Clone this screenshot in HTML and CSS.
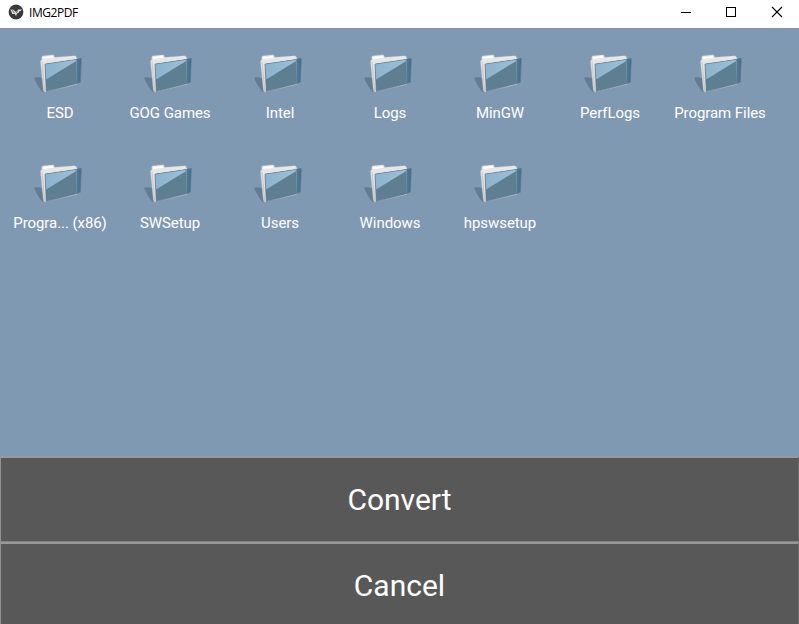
FILE: index.html
```html
<!DOCTYPE html>
<html lang="en">
<head>
<meta charset="utf-8">
<title>IMG2PDF</title>
<link rel="stylesheet" href="styles.css">
</head>
<body>
<svg width="0" height="0" class="defs">
  <defs>
    <linearGradient id="paper" x1="0" y1="0" x2="0" y2="1"><stop offset="0" stop-color="#e9e9e8"/><stop offset="1" stop-color="#d8d8d6"/></linearGradient>
    <linearGradient id="shine" x1="0" y1="0" x2="1" y2="0"><stop offset="0" stop-color="#8cb3cd"/><stop offset="1" stop-color="#9cc0d8"/></linearGradient>
    <linearGradient id="edge" x1="0" y1="0" x2="1" y2="0"><stop offset="0" stop-color="#557c95"/><stop offset="1" stop-color="#416b8b"/></linearGradient>
    <filter id="soft"><feGaussianBlur stdDeviation="1.5"/></filter>
    <symbol id="folder" viewBox="0 0 210 165">
      <path d="M27 98Q38 94 52 100L60 141L52 140Q38 124 27 98Z" fill="#637b92" filter="url(#soft)"/>
      <path d="M46 48L50 44L50 36Q51 32 55 32L84 29Q88 30 89 37L148 32Q153 32 154 36L158 44L156 118L62 141Q56 142 55 136Z" fill="url(#paper)" stroke="#a7b1b9" stroke-width="1"/>
      <path d="M55 36L82 33L86 38L54 42Z" fill="#fff"/>
      <path d="M51 50L59 138" fill="none" stroke="#bdbdba" stroke-width="2"/>
      <path d="M60 57L154 43L155 116L64 139Z" fill="#5e7e92"/>
      <path d="M60 57L155 43L155 47L62 104Z" fill="url(#shine)"/>
      <path d="M154 42L169 40L166 111L154 116Z" fill="url(#edge)"/>
      <path d="M60 57L169 41L166 112L64 140Z" fill="none" stroke="#5c788c" stroke-width="2" stroke-linejoin="round"/>
      <path d="M57 54L154 40" fill="none" stroke="#e4e6e5" stroke-width="3"/>
    </symbol>
  </defs>
</svg>
<div class="window">
  <header class="titlebar">
    <svg class="logo" width="16" height="16" viewBox="0 0 16 16"><circle cx="8" cy="8" r="7.4" fill="#38393b"/><path d="M2.4 5.4L5.4 5.8L8 8L10 5.4L14 5.6L12.3 7.2L11.2 7.3L10.6 9L9.2 9.2L8 12L6.6 9.8L4.4 10.3Z" fill="#dedede"/><path d="M4.4 6L6.2 9M9.6 6.2L8.4 9" stroke="#38393b" stroke-width=".6"/></svg>
    <span class="title">IMG2PDF</span>
    <div class="controls">
      <svg width="46" height="28" viewBox="0 0 46 28" shape-rendering="crispEdges"><path d="M18 12.5H28" stroke="#000"/></svg>
      <svg width="45" height="28" viewBox="0 0 45 28"><rect x="17.5" y="7.5" width="9" height="9" fill="none" stroke="#000"/></svg>
      <svg width="46" height="28" viewBox="0 0 46 28"><path d="M18 7L28 17M28 7L18 17" stroke="#000" stroke-width="1.1"/></svg>
    </div>
  </header>
  <main class="files">
    <div class="file"><svg><use href="#folder"/></svg><span>ESD</span></div>
    <div class="file"><svg><use href="#folder"/></svg><span>GOG Games</span></div>
    <div class="file"><svg><use href="#folder"/></svg><span>Intel</span></div>
    <div class="file"><svg><use href="#folder"/></svg><span>Logs</span></div>
    <div class="file"><svg><use href="#folder"/></svg><span>MinGW</span></div>
    <div class="file"><svg><use href="#folder"/></svg><span>PerfLogs</span></div>
    <div class="file"><svg><use href="#folder"/></svg><span>Program Files</span></div>
    <div class="file"><svg><use href="#folder"/></svg><span>Progra... (x86)</span></div>
    <div class="file"><svg><use href="#folder"/></svg><span>SWSetup</span></div>
    <div class="file"><svg><use href="#folder"/></svg><span>Users</span></div>
    <div class="file"><svg><use href="#folder"/></svg><span>Windows</span></div>
    <div class="file"><svg><use href="#folder"/></svg><span>hpswsetup</span></div>
  </main>
  <button class="action">Convert</button>
  <button class="action">Cancel</button>
</div>
</body>
</html>
```
FILE: styles.css
```css
body { margin: 0; overflow: hidden; }
.defs { position: absolute; }
.window {
  width: 799px;
  height: 624px;
  overflow: hidden;
  display: grid;
  grid-template-rows: 28px 428px 86px 86px;
  background: #8099b3;
  font-family: Roboto, "Liberation Sans", sans-serif;
}
.titlebar {
  display: flex;
  background: #fff;
}
.logo { margin: 4px 5px 0 8px; }
.title {
  font: 12px/26px "Open Sans", "Noto Sans", sans-serif;
  letter-spacing: -0.45px;
  color: #000;
}
.controls {
  display: flex;
  margin-left: auto;
  margin-right: -1px;
}
.files {
  display: grid;
  grid-template-columns: repeat(7, 110px);
  grid-auto-rows: 110px;
  align-content: start;
  padding: 17px 0 0 5px;
}
.file {
  display: flex;
  flex-direction: column;
  align-items: center;
  color: #fff;
  font-size: 15px;
  line-height: 18px;
  letter-spacing: -0.07px;
  white-space: nowrap;
}
.file svg {
  width: 70px;
  height: 55px;
  margin-bottom: 4px;
}
.action {
  box-sizing: border-box;
  margin: 0;
  padding: 1px 0 0;
  border: 1px solid #929292;
  border-top: 2px solid #999;
  border-right-color: #686868;
  border-bottom-color: #838383;
  background: #585858;
  color: #fff;
  font: 30px/82px Roboto, "Liberation Sans", sans-serif;
}
```
